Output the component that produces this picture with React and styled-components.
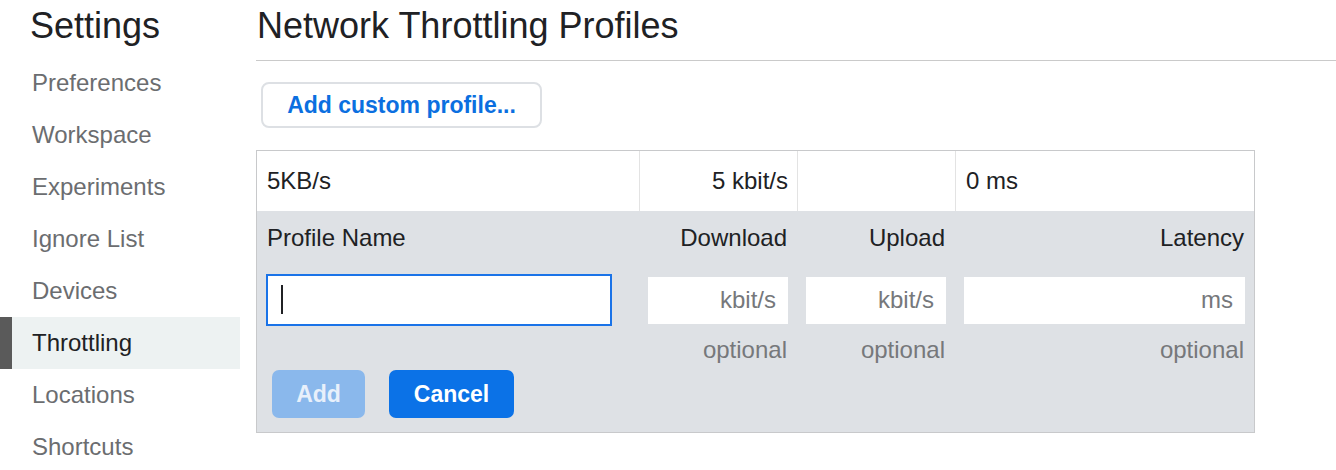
import React from 'react';
import styled, { createGlobalStyle } from 'styled-components';

const GlobalStyle = createGlobalStyle`
  html, body {
    margin: 0;
    padding: 0;
    background: #fff;
    font-family: "Liberation Sans", Arial, sans-serif;
    color: #202124;
  }
  * { box-sizing: border-box; }
`;

const navItems = ['Preferences', 'Workspace', 'Experiments', 'Ignore List', 'Devices', 'Throttling', 'Locations', 'Shortcuts'];

const columns = [
  { label: 'Profile Name', value: '5KB/s', align: 'left' },
  { label: 'Download', value: '5 kbit/s', align: 'right', unit: 'kbit/s' },
  { label: 'Upload', value: '', align: 'right', unit: 'kbit/s' },
  { label: 'Latency', value: '0 ms', align: 'left', unit: 'ms' }
];

const App = () => {
  return (
    <>
      <GlobalStyle />
      <Page>
        <Sidebar>
          <SideTitle>Settings</SideTitle>
          <Nav>
            {navItems.map((item) => (
              <NavItem key={item} $active={item === 'Throttling'}>{item}</NavItem>
            ))}
          </Nav>
        </Sidebar>
        <Main>
          <Header>Network Throttling Profiles</Header>
          <Body>
            <OutlineButton>Add custom profile...</OutlineButton>
            <Table>
              <Row>
                {columns.map((c, i) => (
                  <Cell key={i} $align={c.align}>{c.value}</Cell>
                ))}
              </Row>
              <Editor>
                <Grid>
                  {columns.map((c, i) => (
                    <Label key={i} $align={i === 0 ? 'left' : 'right'}>{c.label}</Label>
                  ))}
                  <FieldCell>
                    <NameWrap>
                      <NameInput type="text" />
                      <Caret />
                    </NameWrap>
                  </FieldCell>
                  {columns.slice(1).map((c, i) => (
                    <FieldCell key={i}>
                      <UnitInput type="text" placeholder={c.unit} />
                    </FieldCell>
                  ))}
                  <Hint />
                  <Hint>optional</Hint>
                  <Hint>optional</Hint>
                  <Hint>optional</Hint>
                </Grid>
                <Actions>
                  <PrimaryButton $disabled $width={93}>Add</PrimaryButton>
                  <PrimaryButton $width={125}>Cancel</PrimaryButton>
                </Actions>
              </Editor>
            </Table>
          </Body>
        </Main>
      </Page>
    </>
  );
};

const Page = styled.div`
  display: flex;
  width: 1336px;
  height: 470px;
  overflow: hidden;
`;

const Sidebar = styled.aside`
  width: 240px;
  flex-shrink: 0;
  margin-right: 16px;
`;

const SideTitle = styled.h1`
  margin: 0;
  height: 57px;
  padding: 4px 0 0 30px;
  font-size: 36px;
  line-height: 44px;
  font-weight: 400;
  color: #202124;
`;

const Nav = styled.nav`
  display: flex;
  flex-direction: column;
`;

const NavItem = styled.div`
  height: 52px;
  line-height: 52px;
  font-size: 24px;
  color: ${(p) => (p.$active ? '#202124' : '#6b6d70')};
  background: ${(p) => (p.$active ? '#edf2f2' : 'transparent')};
  border-left: ${(p) => (p.$active ? '12px solid #5a5a5a' : '0')};
  padding-left: ${(p) => (p.$active ? '20px' : '32px')};
`;

const Main = styled.main`
  flex: 1;
  display: flex;
  flex-direction: column;
`;

const Header = styled.h2`
  margin: 0;
  height: 61px;
  padding: 4px 0 0 1px;
  font-size: 36px;
  line-height: 44px;
  font-weight: 400;
  border-bottom: 1px solid #cacaca;
`;

const Body = styled.div`
  display: flex;
  flex-direction: column;
  align-items: flex-start;
  padding-top: 21px;
`;

const OutlineButton = styled.button`
  margin-left: 5px;
  height: 46px;
  width: 281px;
  border: 2px solid #dde0e4;
  border-radius: 8px;
  background: #fff;
  color: #0b6fe0;
  font-family: inherit;
  font-size: 23px;
  font-weight: 700;
`;

const Table = styled.div`
  margin-top: 22px;
  width: 999px;
  border: 1px solid #c8c9cb;
`;

const Row = styled.div`
  display: grid;
  grid-template-columns: 382px 158px 158px 1fr;
  height: 60px;
  background: #fff;
`;

const Cell = styled.div`
  display: flex;
  align-items: center;
  justify-content: ${(p) => (p.$align === 'right' ? 'flex-end' : 'flex-start')};
  padding: 0 9px 0 10px;
  font-size: 24px;
  border-left: 1px solid #e3e3e3;
  &:first-child { border-left: 0; }
`;

const Editor = styled.div`
  background: #dee1e5;
  padding: 12px 0 14px;
`;

const Grid = styled.div`
  display: grid;
  grid-template-columns: 382px 158px 158px 1fr;
  grid-template-rows: 30px 73px 30px;
  align-items: end;
`;

const Label = styled.div`
  padding: 0 10px;
  font-size: 24px;
  line-height: 30px;
  text-align: ${(p) => p.$align};
  align-self: center;
`;

const FieldCell = styled.div`
  display: flex;
  align-items: center;
  align-self: end;
  height: 52px;
  padding: 0 9px;
`;

const NameWrap = styled.div`
  position: relative;
  width: 346px;
`;

const NameInput = styled.input`
  display: block;
  width: 100%;
  height: 52px;
  border: 2px solid #1a73e8;
  outline: none;
  background: #fff;
  font-family: inherit;
  font-size: 24px;
`;

const Caret = styled.span`
  position: absolute;
  left: 15px;
  top: 11px;
  width: 2px;
  height: 29px;
  background: #202124;
`;

const UnitInput = styled.input`
  display: block;
  width: 100%;
  height: 47px;
  border: 0;
  outline: none;
  background: #fff;
  padding: 0 12px;
  text-align: right;
  font-family: inherit;
  font-size: 24px;
  &::placeholder { color: #76787b; }
`;

const Hint = styled.div`
  padding: 0 10px;
  font-size: 24px;
  line-height: 30px;
  text-align: right;
  color: #76787b;
  align-self: start;
  margin-top: 9px;
`;

const Actions = styled.div`
  display: flex;
  gap: 24px;
  padding: 14px 0 0 15px;
`;

const PrimaryButton = styled.button`
  width: ${(p) => p.$width}px;
  height: 48px;
  padding: 0;
  border: 0;
  border-radius: 7px;
  background: ${(p) => (p.$disabled ? '#8ab8ec' : '#0b72e7')};
  color: ${(p) => (p.$disabled ? '#e8f0fb' : '#fff')};
  font-family: inherit;
  font-size: 23px;
  font-weight: 700;
`;

export default App;
